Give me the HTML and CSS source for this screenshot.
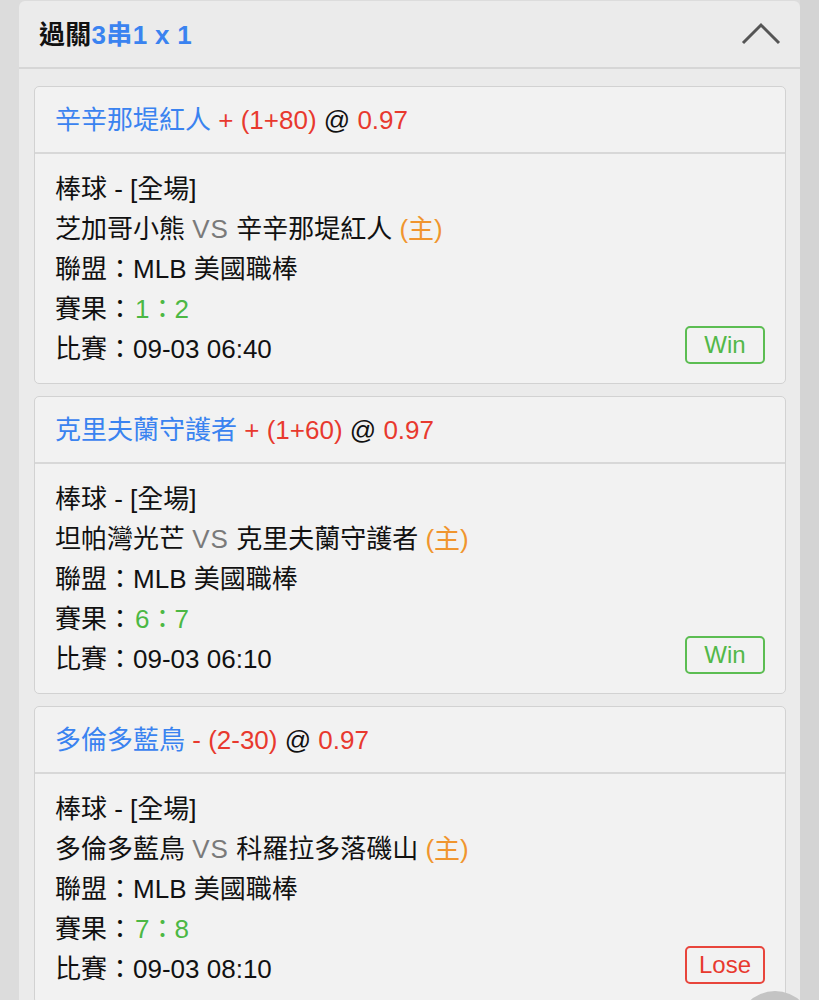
FILE: index.html
```html
<!DOCTYPE html>
<html lang="zh-TW">
<head>
<meta charset="utf-8">
<link rel="stylesheet" href="styles.css">
</head>
<body>
<div class="page">
  <section class="panel">
    <header class="panel-head">
      <h2 class="panel-title">過關<span class="blue">3串1 x 1</span></h2>
      <svg class="chev" width="40" height="24" viewBox="0 0 40 24"><path d="M2 21 L20 3 L38 21" fill="none" stroke="#555" stroke-width="3"/></svg>
    </header>
    <div class="panel-body">
      <article class="card">
        <div class="card-head"><span class="blue">辛辛那堤紅人</span> <span class="red">+ (1+80)</span> @ <span class="red">0.97</span></div>
        <div class="card-body">
          <div class="row">棒球 - [全場]</div>
          <div class="row">芝加哥小熊 <span class="gray">VS</span> 辛辛那堤紅人 <span class="orange">(主)</span></div>
          <div class="row">聯盟<span class="colon">：</span>MLB 美國職棒</div>
          <div class="row">賽果<span class="colon">：</span><span class="green">1<span class="colon">：</span>2</span></div>
          <div class="row last"><span>比賽<span class="colon">：</span>09-03 06:40</span><span class="badge win">Win</span></div>
        </div>
      </article>
      <article class="card">
        <div class="card-head"><span class="blue">克里夫蘭守護者</span> <span class="red">+ (1+60)</span> @ <span class="red">0.97</span></div>
        <div class="card-body">
          <div class="row">棒球 - [全場]</div>
          <div class="row">坦帕灣光芒 <span class="gray">VS</span> 克里夫蘭守護者 <span class="orange">(主)</span></div>
          <div class="row">聯盟<span class="colon">：</span>MLB 美國職棒</div>
          <div class="row">賽果<span class="colon">：</span><span class="green">6<span class="colon">：</span>7</span></div>
          <div class="row last"><span>比賽<span class="colon">：</span>09-03 06:10</span><span class="badge win">Win</span></div>
        </div>
      </article>
      <article class="card">
        <div class="card-head"><span class="blue">多倫多藍鳥</span> <span class="red">- (2-30)</span> @ <span class="red">0.97</span></div>
        <div class="card-body">
          <div class="row">棒球 - [全場]</div>
          <div class="row">多倫多藍鳥 <span class="gray">VS</span> 科羅拉多落磯山 <span class="orange">(主)</span></div>
          <div class="row">聯盟<span class="colon">：</span>MLB 美國職棒</div>
          <div class="row">賽果<span class="colon">：</span><span class="green">7<span class="colon">：</span>8</span></div>
          <div class="row last"><span>比賽<span class="colon">：</span>09-03 08:10</span><span class="badge lose">Lose</span></div>
        </div>
      </article>
    </div>
  </section>
</div>
<div class="fab"></div>
</body>
</html>
```

FILE: styles.css
```css
html, body {
  margin: 0;
  padding: 0;
}
body {
  background: #dadada;
  font-family: "Liberation Sans", "Noto Sans CJK TC", sans-serif;
  color: #111;
  height: 1000px;
  overflow: hidden;
}
.page {
  padding: 1px 19px 0 19px;
  background: linear-gradient(to right, #dcdcdc 0, #dcdcdc 800px, #d4d4d4 800px);
  min-height: 1000px;
  box-sizing: border-box;
}
.panel {
  background: #ebebeb;
  border-radius: 6px 6px 0 0;
  min-height: 999px;
}
.panel-head {
  height: 66px;
  box-sizing: border-box;
  height: 68px;
  display: flex;
  align-items: center;
  justify-content: space-between;
  padding: 0 19px 4px 20px;
  border-bottom: 2px solid #d6d6d6;
}
.panel-title {
  margin: 0;
  font-size: 26px;
  font-weight: bold;
  color: #111;
  letter-spacing: 0.3px;
}
.chev {
  display: block;
  margin-top: 4px;
}
.panel-body {
  padding: 17px 14px 0 15px;
  display: flex;
  flex-direction: column;
  gap: 12px;
}
.card {
  background: #f2f2f2;
  border: 1.5px solid #d2d2d2;
  border-radius: 5px;
}
.card-head {
  height: 65px;
  line-height: 66px;
  padding: 0 20px;
  font-size: 26px;
  border-bottom: 2px solid #d8d8d8;
  white-space: pre;
}
.card-body {
  padding: 15px 20px 14px 20px;
}
.row {
  height: 40px;
  line-height: 40px;
  font-size: 26px;
  white-space: pre;
}
.colon {
  display: inline-block;
  width: 26px;
  text-align: center;
  font-feature-settings: "halt";
}
.green .colon {
  width: 24px;
  margin-left: 1px;
}
.gray {
  letter-spacing: 1px;
}
.row.last {
  display: flex;
  justify-content: space-between;
  align-items: center;
}
.blue { color: #3a83f0; }
.red { color: #e8392e; }
.green { color: #4cb844; padding-left: 2px; }
.orange { color: #f0952e; }
.gray { color: #7a7a7a; }
.badge {
  box-sizing: border-box;
  width: 80px;
  height: 38px;
  margin-top: -8px;
  border: 2px solid;
  border-radius: 5px;
  display: flex;
  align-items: center;
  justify-content: center;
  font-size: 24px;
  line-height: 1;
}
.badge.win { color: #52b848; border-color: #5cbd52; }
.badge.lose { color: #e8392e; border-color: #e8453c; }
.fab {
  position: fixed;
  left: 737px;
  top: 991px;
  width: 76px;
  height: 76px;
  border-radius: 50%;
  background: #c4c4c4;
}
```
